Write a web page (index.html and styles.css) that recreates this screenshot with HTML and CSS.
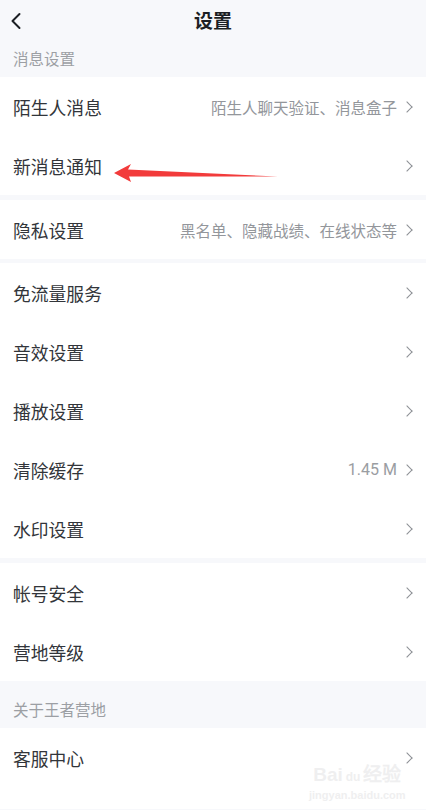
FILE: index.html
```
<!DOCTYPE html>
<html lang="zh-CN">

<head>
  <meta charset="UTF-8">
  <meta name="viewport" content="width=device-width, initial-scale=1.0">
  <title>设置</title>
  <link rel="stylesheet" href="styles.css">
</head>

<body>
  <!-- Top bar -->
  <header class="topbar">
    <svg class="back" width="12" height="18" viewBox="0 0 12 18">
      <path d="M9.5 2 L2.5 9 L9.5 16" fill="none" stroke="#1c1f24" stroke-width="2" stroke-linecap="round" stroke-linejoin="round" />
    </svg>
    <h1 class="title">设置</h1>
  </header>

  <div class="section-label first">消息设置</div>

  <div class="group">
    <div class="row">
      <span class="name">陌生人消息</span>
      <span class="value">陌生人聊天验证、消息盒子</span>
      <span class="chev"></span>
    </div>
    <div class="row">
      <span class="name">新消息通知</span>
      <span class="chev"></span>
    </div>
  </div>

  <div class="group gap4">
    <div class="row">
      <span class="name">隐私设置</span>
      <span class="value">黑名单、隐藏战绩、在线状态等</span>
      <span class="chev"></span>
    </div>
  </div>

  <div class="group">
    <div class="row">
      <span class="name">免流量服务</span>
      <span class="chev"></span>
    </div>
    <div class="row">
      <span class="name">音效设置</span>
      <span class="chev"></span>
    </div>
    <div class="row">
      <span class="name">播放设置</span>
      <span class="chev"></span>
    </div>
    <div class="row">
      <span class="name">清除缓存</span>
      <span class="value num">1.45 M</span>
      <span class="chev"></span>
    </div>
    <div class="row">
      <span class="name">水印设置</span>
      <span class="chev"></span>
    </div>
  </div>

  <div class="group flush">
    <div class="row">
      <span class="name">帐号安全</span>
      <span class="chev"></span>
    </div>
    <div class="row">
      <span class="name">营地等级</span>
      <span class="chev"></span>
    </div>
  </div>

  <div class="section-label">关于王者营地</div>

  <div class="group last">
    <div class="row">
      <span class="name">客服中心</span>
      <span class="chev"></span>
    </div>
  </div>

  <!-- Red arrow drawn over the screenshot -->
  <svg class="arrow" width="426" height="200" viewBox="0 0 426 200">
    <polygon points="114,173 131,164 128,169.5 278,176.5 129,176.5 131,182" fill="#f23b3b" />
  </svg>

  <!-- Watermark -->
  <div class="watermark">
    <div class="wm-top">Bai<span class="wm-paw">du</span>经验</div>
    <div class="wm-url">jingyan.baidu.com</div>
  </div>
</body>

</html>
```

FILE: styles.css
```
/* Base */
body {
  margin: 0;
  background-color: #f7f8fb;
  font-family: "Noto Sans CJK SC", "Noto Sans", sans-serif;
  color: #25282d;
}

/* Top bar */
.topbar {
  height: 40px;
  display: flex;
  align-items: center;
  justify-content: center;
  position: relative;
}

.back {
  position: absolute;
  left: 10px;
  top: 12px;
}

.title {
  margin: 0;
  font-size: 19px;
  font-weight: bold;
  color: #1c1f24;
  line-height: 38px;
}

/* Section labels */
.section-label {
  height: 38px;
  padding-top: 9px;
  line-height: 38px;
  padding-left: 13px;
  font-size: 15.5px;
  color: #9c9fa4;
}

.section-label.first {
  height: 37px;
  padding-top: 0;
  line-height: 36px;
}

/* Groups of rows */
.group {
  background-color: #fff;
  margin-bottom: 5px;
}

.group.gap4 {
  margin-bottom: 4px;
}

.group.flush {
  margin-bottom: 0;
}

.group.last {
  margin-bottom: 0;
  min-height: 81px;
}

.row {
  height: 59px;
  display: flex;
  align-items: center;
  padding: 0 13px;
}

.name {
  flex: 1;
  font-size: 17.8px;
  color: #32353a;
}

.value {
  font-size: 15.5px;
  color: #93969b;
  margin-right: 6px;
}

.value.num {
  font-family: "Roboto", "Noto Sans", sans-serif;
  font-size: 16px;
  color: #9a9da2;
}

/* Chevron */
.chev {
  width: 7px;
  height: 7px;
  border-top: 1.5px solid #8c8f94;
  border-right: 1.5px solid #8c8f94;
  transform: rotate(45deg);
  margin-right: 2px;
}

/* Overlays */
.arrow {
  position: absolute;
  left: 0;
  top: 0;
}

.watermark {
  position: absolute;
  left: 309px;
  top: 764px;
  color: #efeff0;
  text-align: center;
}

.wm-top {
  font-family: "Liberation Sans", sans-serif;
  font-size: 19px;
  font-weight: bold;
  line-height: 22px;
}

.wm-paw {
  font-size: 12px;
  margin: 0 3px;
}

.wm-url {
  font-family: "Liberation Sans", sans-serif;
  font-size: 11px;
  font-weight: bold;
  line-height: 14px;
}
```
